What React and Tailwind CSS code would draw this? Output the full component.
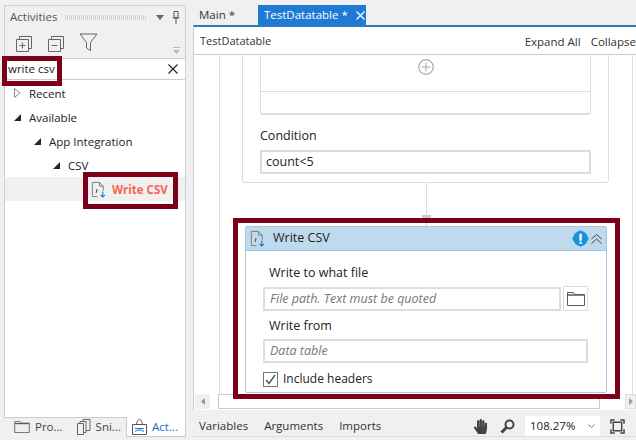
import React from "react";
import { FaHandPaper } from "react-icons/fa";

const font = { fontFamily: '"Open Sans", "Noto Sans", sans-serif' };

function CsvIcon({ className }) {
  return (
    <svg viewBox="0 0 18 18" className={className} fill="none">
      <path d="M2.500 16.500V1.500H10l4 4v5" stroke="#7a7a7a" strokeWidth="1" />
      <path d="M10 1.500v4h4M2.500 16.500H8" stroke="#7a7a7a" strokeWidth="1" />
      <path d="M6.500 12.500l1-4" stroke="#555" strokeWidth="1.200" />
      <path d="M13.500 11.500v5.500M11.300 14.800l2.200 2.200 2.200-2.200" stroke="#1b7ad0" strokeWidth="1.200" />
    </svg>
  );
}

function Folder({ className }) {
  return (
    <svg viewBox="0 0 18 14" className={className} fill="none" stroke="#5c5c5c">
      <path d="M.5 13.500V.5h6l1.500 2h9.500v11z" />
      <path d="M.5 3h17" strokeWidth="1.500" />
    </svg>
  );
}

function Caret({ open }) {
  return open ? (
    <svg viewBox="0 0 7 7" className="w-[7px] h-[7px]">
      <path d="M7 0v7H0z" fill="#262626" />
    </svg>
  ) : (
    <svg viewBox="0 0 7 10" className="w-[7px] h-[10px]" fill="none">
      <path d="M.5.5l5.500 4.500-5.500 4.500z" stroke="#8a8a8a" />
    </svg>
  );
}

function TreeRow({ indent, open, children }) {
  return (
    <div className={`flex items-center h-6 ${indent}`}>
      <div className="w-[7px] flex justify-center mr-[8px]">
        <Caret open={open} />
      </div>
      <span className="text-[11.5px] text-[#222] pt-[2px]">{children}</span>
    </div>
  );
}

function BottomTab({ icon, label, active }) {
  return (
    <div className={`flex items-center gap-[5px] h-full px-[5px] text-[11.5px] ${active ? "bg-white text-[#1b6fc2] border-x border-b border-[#ccc] w-[60px]" : "text-[#444]"}`}>
      {icon}
      <span>{label}</span>
    </div>
  );
}

function ActivitiesPanel() {
  return (
    <div className="w-[182px] ml-[4px] mt-[5px] flex flex-col h-[432px]">
      <div className="flex-1 flex flex-col border-x border-t border-[#d0d0d0] min-h-0">
        <div className="h-[52px] shrink-0 flex flex-col">
          <div className="flex items-center h-[22px] pl-[5px] pr-[5px] gap-2">
            <span className="text-[11.5px] text-[#555]">Activities</span>
            <div className="flex-1 h-[5px] bg-[repeating-linear-gradient(90deg,#d0d0d0_0,#d0d0d0_1px,transparent_1px,transparent_2px)]" />
            <svg viewBox="0 0 8 5" className="w-[8px] h-[5px] ml-[1px]">
              <path d="M0 0h8L4 5z" fill="#666" />
            </svg>
            <svg viewBox="0 0 8 13" className="w-[8px] h-[13px]" fill="none" stroke="#555">
              <path d="M2 .5h4v6H2zM.5 7h7M4 7v6" />
            </svg>
          </div>
          <div className="flex items-center h-[30px] pl-[11px] pt-[1px]">
            <svg viewBox="0 0 17 17" className="w-[17px] h-[17px]" fill="none" stroke="#666">
              <path d="M.5 4.500h12v12H.5zM3.500 4.500v-3h12v12h-3" />
              <path d="M3.500 10.500h6M6.500 7.500v6" />
            </svg>
            <svg viewBox="0 0 17 17" className="w-[17px] h-[17px] ml-[15px]" fill="none" stroke="#666">
              <path d="M.5 4.500h12v12H.5zM3.500 4.500v-3h12v12h-3" />
              <path d="M3.500 10.500h6" />
            </svg>
            <svg viewBox="0 0 19 19" className="w-[19px] h-[19px] ml-[14px] -mt-[3px]" fill="none" stroke="#666">
              <path d="M1 1h17l-6.500 8.500v8l-4-2.500V9.500z" />
            </svg>
            <svg viewBox="0 0 7 7" className="w-[7px] h-[7px] ml-auto mr-[5px] mt-[14px]">
              <path d="M0 0h7v1H0zM0 3h7L3.500 7z" fill="#b5b5b5" />
            </svg>
          </div>
        </div>
        <div className="h-[22px] shrink-0 bg-white border-y border-[#ccc] flex items-center pl-[3px] pr-[7px]">
          <span className="text-[11.5px] text-[#222]">write csv</span>
          <svg viewBox="0 0 10 10" className="w-[10px] h-[10px] ml-auto" fill="none" stroke="#222" strokeWidth="1.100">
            <path d="M.5.5l9 9M9.500.5l-9 9" />
          </svg>
        </div>
        <div className="flex-1 bg-white pt-[1px] border-b border-[#ccc]">
          <TreeRow indent="pl-[9px]">Recent</TreeRow>
          <TreeRow indent="pl-[9px]" open>Available</TreeRow>
          <TreeRow indent="pl-[29px]" open>App Integration</TreeRow>
          <TreeRow indent="pl-[48px]" open>CSV</TreeRow>
          <div className="flex items-center h-[24px] bg-[#f0f0f0] pl-[85px]">
            <CsvIcon className="w-[17px] h-[17px]" />
            <span className="text-[11.5px] font-bold text-[#f4664f] ml-[5px] pt-[1px]">Write CSV</span>
          </div>
        </div>
      </div>
      <div className="h-[20px] shrink-0 flex items-center -mt-px">
        <div className="flex-1 flex items-center h-full pl-[5px] gap-[4px]">
          <BottomTab icon={<Folder className="w-[16px] h-[12px]" />} label="Pro..." />
          <BottomTab
            icon={
              <svg viewBox="0 0 14 16" className="w-[14px] h-[16px]" fill="none" stroke="#666">
                <path d="M.5 4.500h6v11h-6zM3 4V2.500h6v11H7M6 2V.5h7v11H9" />
              </svg>
            }
            label="Sni..."
          />
        </div>
        <BottomTab
          active
          icon={
            <svg viewBox="0 0 15 16" className="w-[15px] h-[16px] shrink-0" fill="none" stroke="#555">
              <path d="M.5 5.500h14v10H.5zM4.500 5.500C5 2 6 .5 7.500.5S10 2 10.500 5.500" />
              <path d="M3 9.500h9M3 12.500l3-1.500 3 0 3 1.500" stroke="#1b7ad0" />
            </svg>
          }
          label="Act..."
        />
      </div>
    </div>
  );
}

function FieldBox({ className, children }) {
  return (
    <div className={`h-[24px] border-2 border-[#ddd] bg-white flex items-center pt-[1px] text-[12.5px] ${className}`}>
      {children}
    </div>
  );
}

function WriteCsvCard() {
  return (
    <div className="w-[362px] h-[167px] border border-[#a9c6de] rounded-[2px] bg-white">
      <div className="h-[24px] bg-[#bfdaed] border-b border-[#a9c6de] flex items-center pl-[3px] pr-[4px]">
        <CsvIcon className="w-[17px] h-[17px]" />
        <span className="text-[12.5px] text-[#222] ml-[7px]">Write CSV</span>
        <svg viewBox="0 0 16 16" className="w-[17px] h-[17px] ml-auto">
          <circle cx="8" cy="8" r="7" fill="#1b93dc" />
          <path d="M8 0l8 8-8 8-8-8z" fill="#1b93dc" />
          <path d="M7 3.500h2.200v6.500H7zM7 11h2.200v2H7z" fill="#fff" />
        </svg>
        <svg viewBox="0 0 11 10" className="w-[11px] h-[10px] ml-[2px]" fill="none" stroke="#444">
          <path d="M.5 5L5.500.5l5 4.500M.5 9.500L5.500 5l5 4.500" />
        </svg>
      </div>
      <div className="pl-[17px] pr-[18px]">
        <div className="text-[12.5px] text-[#222] pl-[6px] mt-[13px] h-[18px] leading-[18px]">Write to what file</div>
        <div className="flex mt-[5px] gap-[2px]">
          <FieldBox className="flex-1 italic text-[#777] px-[5px]">File path. Text must be quoted</FieldBox>
          <div className="w-[25px] h-[25px] -mt-px border border-[#ddd] flex items-center justify-center">
            <Folder className="w-[18px] h-[14px]" />
          </div>
        </div>
        <div className="text-[12.5px] text-[#222] pl-[6px] mt-[6px] h-[18px] leading-[18px]">Write from</div>
        <FieldBox className="mt-[4px] italic text-[#777] px-[5px]">Data table</FieldBox>
        <div className="flex items-center mt-[7px] gap-[5px]">
          <div className="w-[15px] h-[15px] border border-[#777] flex items-center justify-center">
            <svg viewBox="0 0 11 11" className="w-[11px] h-[11px]" fill="none" stroke="#555" strokeWidth="1.400">
              <path d="M1 6l3 3.500L10 1" />
            </svg>
          </div>
          <span className="text-[12px] text-[#222]">Include headers</span>
        </div>
      </div>
    </div>
  );
}

function Designer() {
  return (
    <div className="flex-1 bg-white overflow-hidden min-h-0">
      <div className="ml-[25px] h-full border-x border-[#ddd] w-[414px]">
        <div className="ml-[22px] w-[367px] h-[128px] border-x border-b border-[#ddd] rounded-b-[3px] pl-[17px]">
          <div className="w-[331px] h-[60px] border-x border-b-2 border-[#ddd] rounded-b-[3px]">
            <div className="h-[37px] border-b border-[#ddd] flex justify-center pt-[4px]">
              <svg viewBox="0 0 16 16" className="w-[16px] h-[16px]" fill="none" stroke="#a8a8a8">
                <circle cx="8" cy="8" r="7.300" strokeWidth="1.200" />
                <path d="M8 3.500v9M3.500 8h9" />
              </svg>
            </div>
          </div>
          <div className="text-[12.5px] text-[#222] mt-[12px] h-[18px] leading-[18px]">Condition</div>
          <FieldBox className="w-[331px] mt-[5px] text-[#222] px-[4px]">count&lt;5</FieldBox>
        </div>
        <div className="flex flex-col items-center h-[43px] w-[412px]">
          <div className="w-px h-[32px] bg-[#ddd]" />
          <div className="w-[9px] h-[3px] bg-[#ccc]" />
          <div className="w-px h-[8px] bg-[#f3c9c9]" />
        </div>
        <div className="ml-[25px]">
          <WriteCsvCard />
        </div>
      </div>
    </div>
  );
}

function HScrollBar() {
  return (
    <div className="h-[16px] shrink-0 bg-white flex items-start pl-[1px]">
      <div className="w-[15px] h-[15px] bg-[#f0f0f0] flex items-center justify-center">
        <svg viewBox="0 0 4 7" className="w-[4px] h-[7px]">
          <path d="M4 0v7L0 3.500z" fill="#999" />
        </svg>
      </div>
      <div className="ml-[8px] w-[382px] h-[15px] border border-[#ccc]" />
      <div className="ml-auto w-[11px] h-[15px] bg-[#f0f0f0] border border-[#ddd] flex items-center justify-center">
        <svg viewBox="0 0 4 7" className="w-[4px] h-[7px]">
          <path d="M0 0v7l4-3.500z" fill="#999" />
        </svg>
      </div>
    </div>
  );
}

export default function App() {
  return (
    <div className="relative w-[636px] h-[440px] bg-[#f0f0f0] flex overflow-hidden" style={font}>
      <ActivitiesPanel />
      <div className="ml-[7px] w-[443px] flex flex-col">
        <div className="h-[25px] shrink-0 pt-[5px] flex items-end">
          <div className="w-[65px] h-[20px] pl-[6px] text-[11.5px] leading-[20px] text-[#333]">Main *</div>
          <div className="w-[108px] h-[20px] bg-[#1e7ad4] text-white text-[11.5px] leading-[20px] pl-[6px] flex items-center gap-[8px] whitespace-nowrap">
            <span>TestDatatable *</span>
            <svg viewBox="0 0 9 9" className="w-[9px] h-[9px]" fill="none" stroke="#fff" strokeWidth="1.200">
              <path d="M.5.5l8 8M8.500.5l-8 8" />
            </svg>
          </div>
        </div>
        <div className="flex-1 flex flex-col border-t-2 border-t-[#2a7dc0] border-l border-l-[#ccc] bg-white min-h-0">
          <div className="h-[28px] shrink-0 border-b border-[#ccc] flex items-center pl-[6px] pt-[2px] text-[11.5px] text-[#333] whitespace-nowrap">
            <span className="text-[11px]">TestDatatable</span>
            <span className="ml-auto">Expand All</span>
            <span className="ml-[10px]">Collapse</span>
          </div>
          <Designer />
          <HScrollBar />
        </div>
        <div className="h-[27px] mb-[3px] shrink-0 flex items-center pt-[6px] pl-[6px] text-[11.5px] text-[#333] border-b border-[#ddd]">
          <span>Variables</span>
          <span className="ml-[16px]">Arguments</span>
          <span className="ml-[16px]">Imports</span>
          <FaHandPaper className="ml-auto w-[15px] h-[15px] text-[#444]" />
          <svg viewBox="0 0 15 15" className="ml-[12px] w-[15px] h-[15px]" fill="none" stroke="#444">
            <circle cx="9.500" cy="5.500" r="4" strokeWidth="2" />
            <path d="M6.500 8.500L1.500 13.500" strokeWidth="3" />
          </svg>
          <div className="ml-[10px] w-[75px] h-[20px] bg-white flex items-center pl-[5px] text-[#222]">
            <span>108.27%</span>
            <svg viewBox="0 0 7 4" className="w-[7px] h-[4px] ml-auto mr-[5px]" fill="none" stroke="#777">
              <path d="M.5.5l3 3 3-3" />
            </svg>
          </div>
          <svg viewBox="0 0 16 16" className="ml-[10px] mr-[11px] w-[15px] h-[15px]" fill="none" stroke="#444" strokeWidth="1.500">
            <path d="M1 5V1h4M11 1h4v4M15 11v4h-4M5 15H1v-4M3.500 3.500h9v9h-9z" />
          </svg>
        </div>
      </div>

      {/* red annotation frames */}
      <div className="absolute left-[2px] top-[56px] w-[60px] h-[30px] border-[5px] border-[#7d0019]" />
      <div className="absolute left-[83px] top-[172px] w-[95px] h-[37px] border-[5px] border-[#7d0019]" />
      <div className="absolute left-[233px] top-[218px] w-[387px] h-[181px] border-[5px] border-[#7d0019]" />
    </div>
  );
}
